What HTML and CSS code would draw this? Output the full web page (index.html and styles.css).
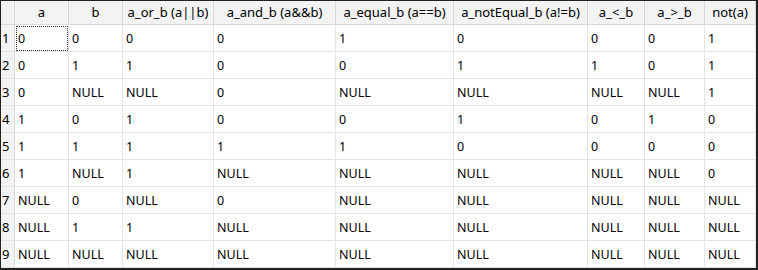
FILE: index.html
```html
<!DOCTYPE html>
<html>
<head>
<meta charset="utf-8">
<link rel="stylesheet" href="styles.css">
</head>
<body>
<div class="grid">
  <div class="hd corner"></div>
  <div class="hd">a</div>
  <div class="hd">b</div>
  <div class="hd">a_or_b (a||b)</div>
  <div class="hd">a_and_b (a&amp;&amp;b)</div>
  <div class="hd">a_equal_b (a==b)</div>
  <div class="hd">a_notEqual_b (a!=b)</div>
  <div class="hd">a_&lt;_b</div>
  <div class="hd">a_&gt;_b</div>
  <div class="hd">not(a)</div>

  <div class="rn">1</div><div class="c focus">0</div><div class="c">0</div><div class="c">0</div><div class="c">0</div><div class="c">1</div><div class="c">0</div><div class="c">0</div><div class="c">0</div><div class="c">1</div>
  <div class="rn">2</div><div class="c">0</div><div class="c">1</div><div class="c">1</div><div class="c">0</div><div class="c">0</div><div class="c">1</div><div class="c">1</div><div class="c">0</div><div class="c">1</div>
  <div class="rn">3</div><div class="c">0</div><div class="c">NULL</div><div class="c">NULL</div><div class="c">0</div><div class="c">NULL</div><div class="c">NULL</div><div class="c">NULL</div><div class="c">NULL</div><div class="c">1</div>
  <div class="rn">4</div><div class="c">1</div><div class="c">0</div><div class="c">1</div><div class="c">0</div><div class="c">0</div><div class="c">1</div><div class="c">0</div><div class="c">1</div><div class="c">0</div>
  <div class="rn">5</div><div class="c">1</div><div class="c">1</div><div class="c">1</div><div class="c">1</div><div class="c">1</div><div class="c">0</div><div class="c">0</div><div class="c">0</div><div class="c">0</div>
  <div class="rn">6</div><div class="c">1</div><div class="c">NULL</div><div class="c">1</div><div class="c">NULL</div><div class="c">NULL</div><div class="c">NULL</div><div class="c">NULL</div><div class="c">NULL</div><div class="c">0</div>
  <div class="rn">7</div><div class="c">NULL</div><div class="c">0</div><div class="c">NULL</div><div class="c">0</div><div class="c">NULL</div><div class="c">NULL</div><div class="c">NULL</div><div class="c">NULL</div><div class="c">NULL</div>
  <div class="rn">8</div><div class="c">NULL</div><div class="c">1</div><div class="c">1</div><div class="c">NULL</div><div class="c">NULL</div><div class="c">NULL</div><div class="c">NULL</div><div class="c">NULL</div><div class="c">NULL</div>
  <div class="rn">9</div><div class="c">NULL</div><div class="c">NULL</div><div class="c">NULL</div><div class="c">NULL</div><div class="c">NULL</div><div class="c">NULL</div><div class="c">NULL</div><div class="c">NULL</div><div class="c">NULL</div>
</div>
</body>
</html>
```
FILE: styles.css
```css
html, body {
  margin: 0;
  padding: 0;
  background: #ffffff;
}
body {
  font-family: "Noto Sans", "Open Sans", sans-serif;
  font-size: 12px;
  color: #000;
}
.grid {
  width: 758px;
  height: 270px;
  box-sizing: border-box;
  border-top: 1px solid #222;
  border-left: 1px solid #222;
  border-right: 2px solid #222;
  border-bottom: 2px solid #222;
  display: grid;
  grid-template-columns: 14px 54px 54px 91px 122px 118px 134px 57px 60px 51px;
  grid-template-rows: 24px repeat(9, 27px);
  overflow: hidden;
}
.hd {
  box-sizing: border-box;
  background: #f3f3f3;
  border-right: 1px solid #dadada;
  border-bottom: 1px solid #dadada;
  display: flex;
  align-items: center;
  justify-content: center;
  white-space: nowrap;
  padding-bottom: 1px;
  font-size: 13px;
}
.hd:last-child { border-right: none; }
.corner { background: #f3f3f3; }
.rn {
  box-sizing: border-box;
  background: #f3f3f3;
  border-right: 1px solid #dadada;
  border-bottom: 1px solid #e4e4e4;
  display: flex;
  align-items: center;
  padding-left: 1px;
  font-size: 13px;
}
.c {
  box-sizing: border-box;
  border-right: 1px solid #e4e4e4;
  border-bottom: 1px solid #e4e4e4;
  display: flex;
  align-items: center;
  padding-left: 3px;
  white-space: nowrap;
  font-size: 12.5px;
}
.focus {
  outline: 1px dotted #333;
  outline-offset: -2px;
}
```
